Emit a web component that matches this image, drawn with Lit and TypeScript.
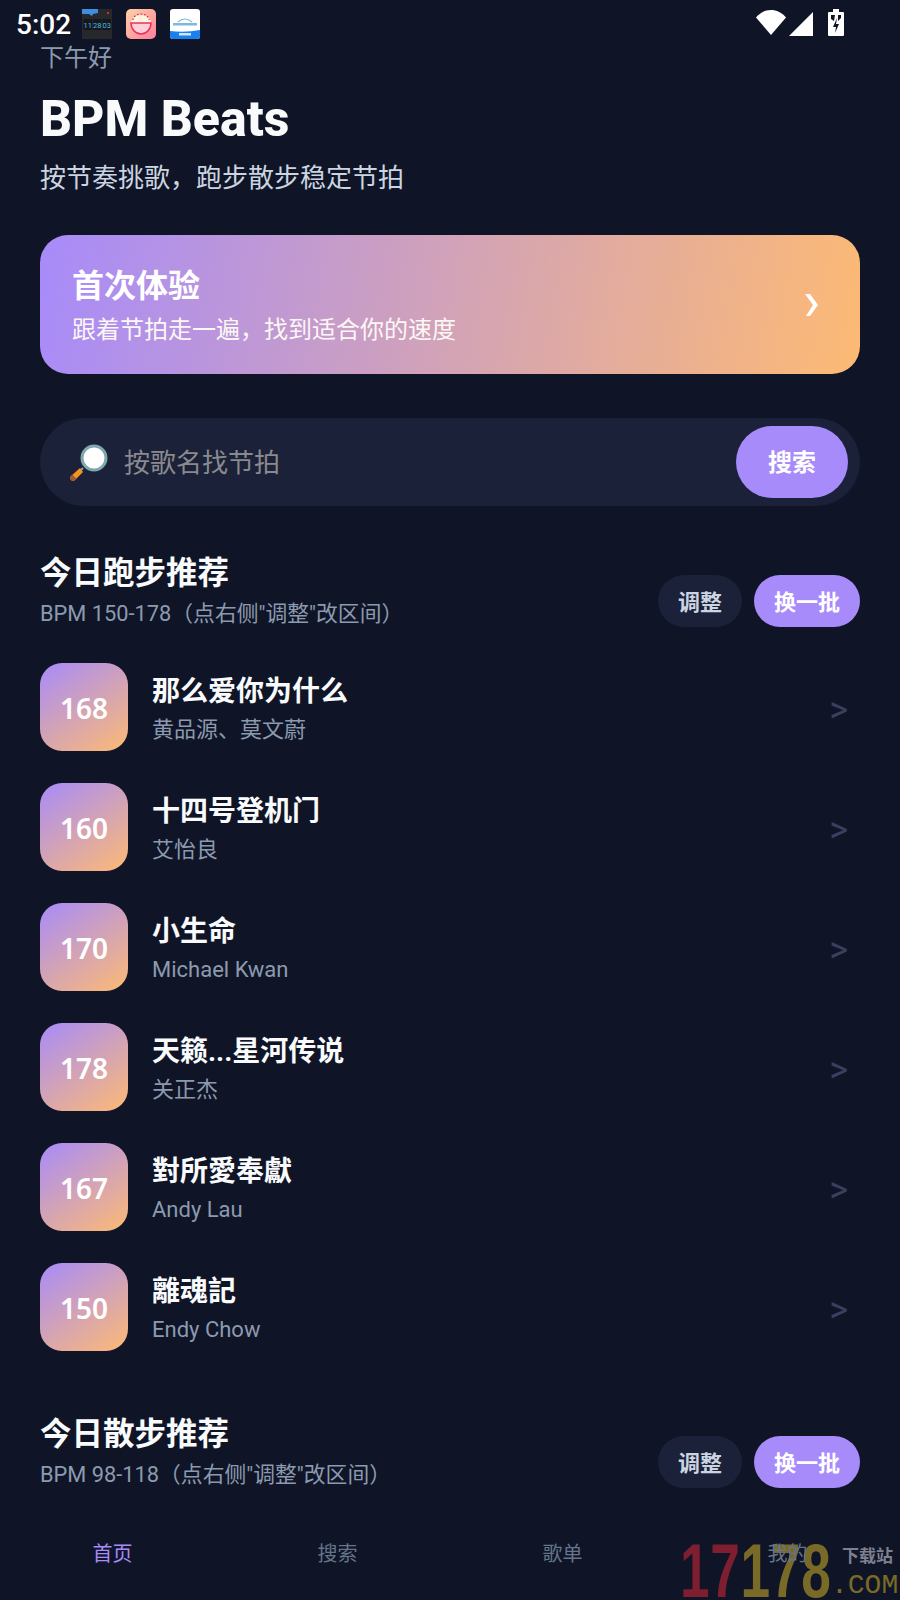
import { LitElement, html, css } from "lit";
import { customElement } from "lit/decorators.js";

const RUN = [
  ["168", "那么爱你为什么", "黄品源、莫文蔚"],
  ["160", "十四号登机门", "艾怡良"],
  ["170", "小生命", "Michael Kwan"],
  ["178", "天籁...星河传说", "关正杰"],
  ["167", "對所愛奉獻", "Andy Lau"],
  ["150", "離魂記", "Endy Chow"],
];

@customElement("app-root")
export class AppRoot extends LitElement {
  static styles = css`
    :host { display: block; width: 900px; height: 1600px; font-family: Roboto, "Noto Sans CJK SC", sans-serif; }
    * { box-sizing: border-box; }
    .page { position: relative; width: 900px; height: 1600px; background: #0f1526; color: #f8fafc; overflow: hidden; display: flex; flex-direction: column; }
    .status { height: 44px; flex: none; display: flex; align-items: flex-start; padding: 0 0 0 16px; position: relative; z-index: 1; }
    .time { font-size: 28px; font-weight: 500; color: #fff; line-height: 50px; width: 66px; }
    .appicons { display: flex; gap: 14px; padding-top: 9px; }
    .appicons svg { display: block; width: 30px; height: 30px; }
    .sysicons { margin-left: auto; margin-right: 56px; display: flex; align-items: flex-start; padding-top: 9px; }
    .content { flex: 1; min-height: 0; overflow: hidden; padding: 0 40px; }
    .greet { font-size: 24px; line-height: 26px; color: #8c9ab0; padding-top: 1px; }
    h1 { margin: 15px 0 0; font-size: 50px; line-height: 66px; font-weight: 800; color: #f8fafc; }
    .tagline { margin-top: 7px; font-size: 26px; line-height: 38px; color: #cbd5e1; }
    .hero { margin-top: 38px; height: 139px; border-radius: 28px; background: linear-gradient(100deg, #a78bfa 0%, #fdba74 100%); display: flex; align-items: center; justify-content: space-between; padding: 0 42px 0 32px; color: #fff; }
    .hero-title { font-size: 32px; line-height: 44px; font-weight: 700; }
    .hero-sub { margin-top: 6px; font-size: 24px; line-height: 32px; color: #fbf7f4; }
    .hero-arrow { width: 13px; height: 22px; display: block; }
    .search { margin-top: 44px; height: 88px; border-radius: 44px; background: #1b2138; display: flex; align-items: center; padding: 0 12px 0 28px; }
    .search svg { width: 40px; height: 40px; flex: none; display: block; margin-top: 4px; }
    .search-text { margin-left: 16px; padding-bottom: 4px; font-size: 26px; color: #8a8a8e; flex: 1; }
    .search-btn { width: 112px; height: 72px; border-radius: 36px; background: #a78bfa; color: #fff; font-size: 24px; font-weight: 700; display: flex; align-items: center; justify-content: center; padding-bottom: 4px; }
    .sec { display: flex; align-items: flex-end; justify-content: space-between; margin-top: 46px; }
    .sec.second { margin-top: 62px; }
    .sec-title { font-size: 31.5px; line-height: 44px; font-weight: 700; color: #f8fafc; }
    .sec-sub { margin-top: 3px; font-size: 21.8px; line-height: 30px; color: #8c9ab0; }
    .btns { display: flex; gap: 12px; margin-bottom: 2px; }
    .pill { height: 52px; border-radius: 26px; display: flex; align-items: center; justify-content: center; font-size: 22px; font-weight: 700; padding-bottom: 2px; }
    .adj { width: 84px; background: #1b2138; color: #cbd5e1; }
    .swap { width: 106px; background: #a78bfa; color: #fff; }
    .list { margin-top: 34px; display: flex; flex-direction: column; gap: 32px; }
    .row { display: flex; align-items: center; height: 88px; }
    .tile { width: 88px; height: 88px; border-radius: 22px; background: linear-gradient(145deg, #a78bfa, #fdba74); display: flex; align-items: center; justify-content: center; font-family: "Noto Sans", sans-serif; font-size: 28px; font-weight: 650; color: #fff; flex: none; padding-top: 2px; }
    .info { margin-left: 24px; flex: 1; padding-top: 4px; }
    .name { font-size: 28px; line-height: 40px; font-weight: 700; color: #f8fafc; }
    .artist { font-size: 22px; line-height: 32px; margin-top: 2px; color: #8c9ab0; }
    .chev { font-size: 36px; line-height: 40px; color: #3a3f60; margin-right: 12px; padding-top: 6px; }
    .nav { flex: none; height: 86px; position: relative; z-index: 2; display: grid; grid-template-columns: repeat(4, 1fr); padding-bottom: 10px; align-items: center; font-size: 20px; text-align: center; color: #64748b; }
    .nav .on { color: #a78bfa; }
    .mark { position: absolute; left: 680px; top: 0; width: 0; height: 0; }
    .digits { position: absolute; left: 0; top: 1541px; font-family: "Liberation Sans", sans-serif; font-weight: 700; font-size: 76px; line-height: 59px; transform: scaleX(0.7); transform-origin: left top; white-space: nowrap; letter-spacing: 1px; }
    .m1 { color: #7e1e30; }
    .m2 { color: #7a6a28; }
    .m3 { position: absolute; left: 162px; top: 1545px; font-size: 17px; line-height: 22px; font-weight: 700; color: #7e8090; white-space: nowrap; }
    .m4 { position: absolute; left: 151px; top: 1572px; font-family: "Liberation Mono", monospace; font-size: 28px; line-height: 28px; color: #7a6a28; white-space: nowrap; }
  `;

  private section(title: string, sub: string, cls = "") {
    return html`<div class="sec ${cls}">
      <div>
        <div class="sec-title">${title}</div>
        <div class="sec-sub">${sub}</div>
      </div>
      <div class="btns"><div class="pill adj">调整</div><div class="pill swap">换一批</div></div>
    </div>`;
  }

  render() {
    return html`<div class="page">
      <div class="status">
        <div class="time">5:02</div>
        <div class="appicons">
          <svg viewBox="0 0 30 30">
            <rect width="30" height="30" fill="#26282c"/>
            <path d="M0 0h16v4l-5 1-1 2-3-2H0z" fill="#3f8de0"/>
            <rect x="25" y="3" width="2" height="2" fill="#e02a2a"/>
            <rect x="1.500" y="10" width="8.500" height="11" fill="#14181c"/><rect x="11" y="10" width="8.500" height="11" fill="#14181c"/><rect x="20.500" y="10" width="8.500" height="11" fill="#14181c"/>
            <text x="5.700" y="18.500" font-size="7.500" font-family="Roboto" text-anchor="middle" fill="#4bb8e8">11</text>
            <text x="15.200" y="18.500" font-size="7.500" font-family="Roboto" text-anchor="middle" fill="#4bb8e8">28</text>
            <text x="24.700" y="18.500" font-size="7.500" font-family="Roboto" text-anchor="middle" fill="#4bb8e8">03</text>
          </svg>
          <svg viewBox="0 0 30 30">
            <defs><linearGradient id="p" x1="0" y1="0" x2="1" y2="1"><stop offset="0" stop-color="#fdd3a8"/><stop offset="1" stop-color="#ff7f9c"/></linearGradient></defs>
            <rect width="30" height="30" rx="5" fill="url(#p)"/>
            <path d="M5 14a10 8 0 0 1 20 0z" fill="#fff3e0"/>
            <path d="M5 14h20a10 11 0 0 1-20 0z" fill="#ffd0d8" stroke="#e8305c" stroke-width="1.500"/>
            <path d="M7 11a8 6 0 0 1 16 0" fill="none" stroke="#b9304c" stroke-width="1.200" stroke-dasharray="1.500 2"/>
          </svg>
          <svg viewBox="0 0 30 30">
            <rect width="30" height="30" rx="3" fill="#fff"/>
            <path d="M3 14h24v2.500H3z" fill="#7eb9dc"/>
            <path d="M8 13q7-6 14 0" fill="none" stroke="#7eb9dc" stroke-width="1.200"/>
            <path d="M0 22q15 2 30-1v6a3 3 0 0 1-3 3H3a3 3 0 0 1-3-3z" fill="#1a80f0"/>
            <rect x="9" y="24" width="12" height="2.500" fill="#cfe6ff"/>
          </svg>
        </div>
        <div class="sysicons">
          <svg width="58" height="27" viewBox="0 0 58 27">
            <path d="M0 9.500C8-.5 22-.5 30 9.500L15 27z" fill="#fff" transform="translate(0 -1)"/>
            <path d="M33 27L57 3v24z" fill="#fff"/>
          </svg>
          <svg style="margin-left:14px" width="16" height="27" viewBox="0 0 16 27">
            <path d="M5 0h6v3h4a1 1 0 0 1 1 1v22a1 1 0 0 1-1 1H1a1 1 0 0 1-1-1V4a1 1 0 0 1 1-1h4z" fill="#fff"/>
            <path d="M3 6h4l-1 6-3-2zM10 6h3v3l-3 3z" fill="#0f1526"/>
            <path d="M9 9l-4 9h3l-1 6 4-9H8z" fill="#0f1526"/>
          </svg>
        </div>
      </div>
      <div class="content">
        <div class="greet">下午好</div>
        <h1>BPM Beats</h1>
        <div class="tagline">按节奏挑歌，跑步散步稳定节拍</div>
        <div class="hero">
          <div>
            <div class="hero-title">首次体验</div>
            <div class="hero-sub">跟着节拍走一遍，找到适合你的速度</div>
          </div>
          <svg class="hero-arrow" viewBox="0 0 13 22"><path d="M0 0h5l8 11-8 11H1l7-11z" fill="#fff"/></svg>
        </div>
        <div class="search">
          <svg viewBox="0 0 40 40">
            <path d="M15 24L4 35" stroke="#7fa9ad" stroke-width="2" />
            <path d="M12 24L3 32a2.500 2.500 0 0 0 4 4l8-8z" fill="#f7931e"/>
            <path d="M3 32a2.500 2.500 0 0 0 4 4l1.500-1.300-4-4z" fill="#9c5b3a"/>
            <circle cx="26" cy="14" r="12" fill="#fff" stroke="#7fa9ad" stroke-width="3"/>
          </svg>
          <div class="search-text">按歌名找节拍</div>
          <div class="search-btn">搜索</div>
        </div>
        ${this.section("今日跑步推荐", 'BPM 150-178（点右侧"调整"改区间）')}
        <div class="list">
          ${RUN.map(([bpm, name, artist]) => html`<div class="row">
            <div class="tile">${bpm}</div>
            <div class="info"><div class="name">${name}</div><div class="artist">${artist}</div></div>
            <div class="chev">&gt;</div>
          </div>`)}
        </div>
        ${this.section("今日散步推荐", 'BPM 98-118（点右侧"调整"改区间）', "second")}
      </div>
      <div class="mark">
        <div class="digits"><span class="m1">17</span><span class="m2">178</span></div>
        <div class="m3">下载站</div>
        <div class="m4">.COM</div>
      </div>
      <div class="nav">
        <div class="on">首页</div><div>搜索</div><div>歌单</div><div>我的</div>
      </div>
    </div>`;
  }
}
